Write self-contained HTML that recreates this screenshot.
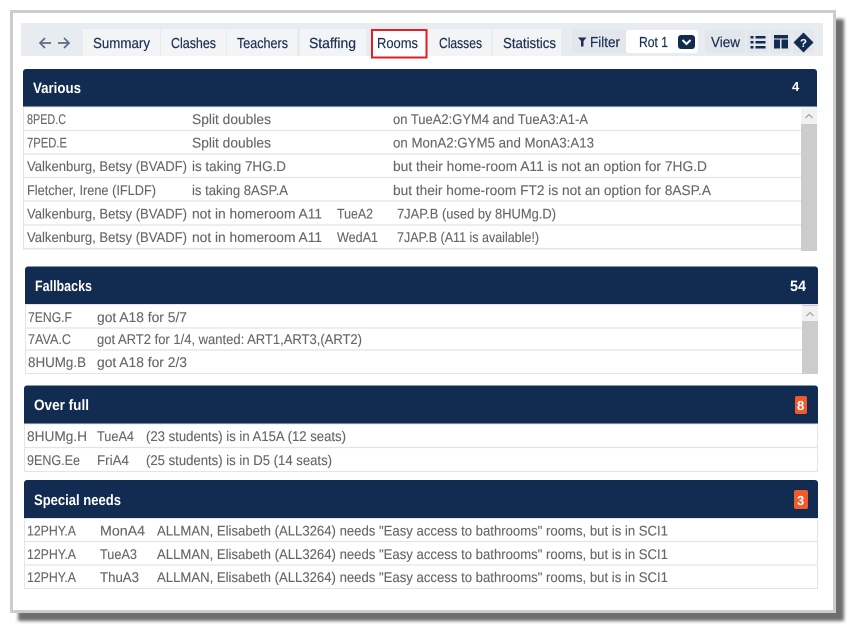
<!DOCTYPE html>
<html><head><meta charset="utf-8"><style>
html,body{margin:0;padding:0;background:#fff;width:857px;height:630px;overflow:hidden}
svg{display:block;filter:blur(.3px)}
text{font-family:"Liberation Sans",Arial,sans-serif;font-size:14px;fill:#666;stroke:#666;stroke-width:.12px;text-rendering:geometricPrecision}
.t{fill:#1a2f52;stroke:#1a2f52;stroke-width:.2px;font-size:14.5px}
.h{fill:#fff;stroke:none;font-size:15px;font-weight:bold}
.l{stroke:#e2e4e8;stroke-width:1.3}
</style></head><body>
<svg width="857" height="630" viewBox="0 0 857 630" xmlns="http://www.w3.org/2000/svg">
<defs><filter id="b" x="-5%" y="-5%" width="110%" height="110%"><feGaussianBlur stdDeviation="1.5"/></filter></defs>
<rect width="857" height="630" fill="#fff"/>
<rect x="18" y="19" width="826" height="602" fill="#6e6e6e" filter="url(#b)"/>
<rect x="11.5" y="11.5" width="823" height="600" fill="#fff" stroke="#cdcdcd" stroke-width="3"/>

<!-- toolbar -->
<rect x="21" y="23" width="802" height="33" fill="#e8ebef"/>
<g fill="#f2f4f6">
<rect x="83" y="29" width="77" height="27"/><rect x="161" y="29" width="65" height="27"/><rect x="227" y="29" width="70" height="27"/><rect x="300" y="29" width="66" height="27"/><rect x="428" y="29" width="63" height="27"/><rect x="493" y="29" width="68" height="27"/>
</g>
<rect x="372" y="30" width="54.5" height="27.5" fill="#fff" stroke="#e01f26" stroke-width="2"/>
<g stroke="#5d6c86" stroke-width="1.7" fill="none"><path d="M51 43H40M45 38l-5 5 5 5"/><path d="M58 43H69M64 38l5 5-5 5"/></g>
<text class="t" x="93" y="48" textLength="57" lengthAdjust="spacingAndGlyphs">Summary</text>
<text class="t" x="171" y="48" textLength="45" lengthAdjust="spacingAndGlyphs">Clashes</text>
<text class="t" x="237" y="48" textLength="51" lengthAdjust="spacingAndGlyphs">Teachers</text>
<text class="t" x="309" y="48" textLength="47" lengthAdjust="spacingAndGlyphs">Staffing</text>
<text class="t" x="377" y="48" textLength="41" lengthAdjust="spacingAndGlyphs">Rooms</text>
<text class="t" x="439" y="48" textLength="43" lengthAdjust="spacingAndGlyphs">Classes</text>
<text class="t" x="503" y="48" textLength="53" lengthAdjust="spacingAndGlyphs">Statistics</text>
<rect x="572" y="30" width="56" height="23" rx="3" fill="#e3e7ec"/>
<rect x="626" y="30" width="72" height="23" rx="3" fill="#fff"/>
<path d="M578 37.5h8.5l-3 3.500v5.500h-2.500v-5.500z" fill="#1a2f52"/>
<text class="t" x="590" y="47" textLength="30" lengthAdjust="spacingAndGlyphs">Filter</text>
<text class="t" x="639" y="47" textLength="29" lengthAdjust="spacingAndGlyphs">Rot 1</text>
<rect x="678" y="35" width="17" height="14" rx="3" fill="#122b50"/>
<path d="M682.5 40l4 4 4-4" stroke="#fff" stroke-width="2" fill="none"/>
<rect x="705" y="30" width="109" height="23" rx="3" fill="#e3e7ec"/>
<path d="M746 30v23M769.5 30v23M792 30v23" stroke="#eef0f3" stroke-width="1"/>
<text class="t" x="711" y="47" textLength="29" lengthAdjust="spacingAndGlyphs">View</text>
<g fill="#122b50">
<rect x="750.5" y="36" width="3" height="2.500"/><rect x="755.5" y="36" width="10" height="2.500"/>
<rect x="750.5" y="41" width="3" height="2.500"/><rect x="755.5" y="41" width="10" height="2.500"/>
<rect x="750.5" y="46" width="3" height="2.500"/><rect x="755.5" y="46" width="10" height="2.500"/>
<rect x="774" y="35" width="14" height="3.500"/><rect x="774" y="39.5" width="6" height="9"/><rect x="781.5" y="39.5" width="6.500" height="9"/>
<path d="M803.5 32.5l10 10-10 10-10-10z"/>
</g>
<text x="800" y="47" style="fill:#fff;stroke:none;font-size:11.5px;font-weight:bold">?</text>

<!-- Various -->
<path d="M23 107V72a3 3 0 0 1 3-3H814a3 3 0 0 1 3 3V107z" fill="#122b50"/>
<text class="h" x="33" y="93" textLength="48" lengthAdjust="spacingAndGlyphs">Various</text>
<text class="h" x="792" y="91" style="font-size:13px">4</text>
<rect x="23.5" y="107" width="793" height="142" fill="#fff" stroke="#e2e4e8"/>
<path class="l" d="M24 130.500H801M24 154H801M24 177.500H801M24 201H801M24 225H801M24 248.500H801"/>
<rect x="801" y="108" width="16" height="143" fill="#ccc"/>
<rect x="801" y="108" width="16" height="16" fill="#f1f1f1"/>
<path d="M805.5 118l3.500-3.500 3.500 3.500" stroke="#a8a8a8" stroke-width="1.3" fill="none"/>
<text x="27" y="124" textLength="39" lengthAdjust="spacingAndGlyphs">8PED.C</text>
<text x="192" y="124" textLength="79" lengthAdjust="spacingAndGlyphs">Split doubles</text>
<text x="393" y="124" textLength="195" lengthAdjust="spacingAndGlyphs">on TueA2:GYM4 and TueA3:A1-A</text>
<text x="27" y="147.5" textLength="40" lengthAdjust="spacingAndGlyphs">7PED.E</text>
<text x="192" y="147.5" textLength="79" lengthAdjust="spacingAndGlyphs">Split doubles</text>
<text x="393" y="147.5" textLength="201" lengthAdjust="spacingAndGlyphs">on MonA2:GYM5 and MonA3:A13</text>
<text x="27" y="171" textLength="160" lengthAdjust="spacingAndGlyphs">Valkenburg, Betsy (BVADF)</text>
<text x="192" y="171" textLength="94" lengthAdjust="spacingAndGlyphs">is taking 7HG.D</text>
<text x="393" y="171" textLength="314" lengthAdjust="spacingAndGlyphs">but their home-room A11 is not an option for 7HG.D</text>
<text x="27" y="195" textLength="129" lengthAdjust="spacingAndGlyphs">Fletcher, Irene (IFLDF)</text>
<text x="192" y="195" textLength="96" lengthAdjust="spacingAndGlyphs">is taking 8ASP.A</text>
<text x="393" y="195" textLength="318" lengthAdjust="spacingAndGlyphs">but their home-room FT2 is not an option for 8ASP.A</text>
<text x="27" y="218.5" textLength="160" lengthAdjust="spacingAndGlyphs">Valkenburg, Betsy (BVADF)</text>
<text x="192" y="218.5" textLength="130" lengthAdjust="spacingAndGlyphs">not in homeroom A11</text>
<text x="337" y="218.5" textLength="36" lengthAdjust="spacingAndGlyphs">TueA2</text>
<text x="397" y="218.5" textLength="159" lengthAdjust="spacingAndGlyphs">7JAP.B (used by 8HUMg.D)</text>
<text x="27" y="242" textLength="160" lengthAdjust="spacingAndGlyphs">Valkenburg, Betsy (BVADF)</text>
<text x="192" y="242" textLength="130" lengthAdjust="spacingAndGlyphs">not in homeroom A11</text>
<text x="337" y="242" textLength="41" lengthAdjust="spacingAndGlyphs">WedA1</text>
<text x="397" y="242" textLength="142" lengthAdjust="spacingAndGlyphs">7JAP.B (A11 is available!)</text>

<!-- Fallbacks -->
<path d="M25 304.500V269.500a3 3 0 0 1 3-3H815a3 3 0 0 1 3 3V304.500z" fill="#122b50"/>
<text class="h" x="35" y="291" textLength="57" lengthAdjust="spacingAndGlyphs">Fallbacks</text>
<text class="h" x="790" y="291" textLength="16" lengthAdjust="spacingAndGlyphs">54</text>
<rect x="25.5" y="304.5" width="792" height="69" fill="#fff" stroke="#e2e4e8"/>
<path class="l" d="M26 328H802M26 350H802"/>
<rect x="802" y="305" width="16" height="69" fill="#ccc"/>
<rect x="802" y="306" width="16" height="15" fill="#f1f1f1"/>
<path d="M806.5 316l3.500-3.500 3.500 3.500" stroke="#a8a8a8" stroke-width="1.3" fill="none"/>
<text x="28" y="322" textLength="44" lengthAdjust="spacingAndGlyphs">7ENG.F</text>
<text x="97" y="322" textLength="90" lengthAdjust="spacingAndGlyphs">got A18 for 5/7</text>
<text x="28" y="344" textLength="43" lengthAdjust="spacingAndGlyphs">7AVA.C</text>
<text x="97" y="344" textLength="265" lengthAdjust="spacingAndGlyphs">got ART2 for 1/4, wanted: ART1,ART3,(ART2)</text>
<text x="28" y="367" textLength="58" lengthAdjust="spacingAndGlyphs">8HUMg.B</text>
<text x="97" y="367" textLength="90" lengthAdjust="spacingAndGlyphs">got A18 for 2/3</text>

<!-- Over full -->
<path d="M24 424V388.500a3 3 0 0 1 3-3H815a3 3 0 0 1 3 3V424z" fill="#122b50"/>
<text class="h" x="34" y="410" textLength="55" lengthAdjust="spacingAndGlyphs">Over full</text>
<rect x="795" y="396" width="12" height="18" rx="2" fill="#f15a29"/>
<text class="h" x="797" y="410" style="font-size:13px">8</text>
<rect x="24.5" y="424" width="793" height="47.5" fill="#fff" stroke="#e2e4e8"/>
<path class="l" d="M25 447.500H817"/>
<text x="27" y="441" textLength="60" lengthAdjust="spacingAndGlyphs">8HUMg.H</text>
<text x="97" y="441" textLength="37" lengthAdjust="spacingAndGlyphs">TueA4</text>
<text x="146" y="441" textLength="200" lengthAdjust="spacingAndGlyphs">(23 students) is in A15A (12 seats)</text>
<text x="27" y="465" textLength="53" lengthAdjust="spacingAndGlyphs">9ENG.Ee</text>
<text x="97" y="465" textLength="32" lengthAdjust="spacingAndGlyphs">FriA4</text>
<text x="146" y="465" textLength="186" lengthAdjust="spacingAndGlyphs">(25 students) is in D5 (14 seats)</text>

<!-- Special needs -->
<path d="M24 518.500V483a3 3 0 0 1 3-3H815a3 3 0 0 1 3 3V518.500z" fill="#122b50"/>
<text class="h" x="34" y="505" textLength="87" lengthAdjust="spacingAndGlyphs">Special needs</text>
<rect x="794" y="490" width="14" height="19" rx="2" fill="#f15a29"/>
<text class="h" x="797" y="505" style="font-size:13px">3</text>
<rect x="24.5" y="518.5" width="793" height="70" fill="#fff" stroke="#e2e4e8"/>
<path class="l" d="M25 541.500H817M25 565H817"/>
<text x="27" y="535.5" textLength="49" lengthAdjust="spacingAndGlyphs">12PHY.A</text>
<text x="100" y="535.5" textLength="45" lengthAdjust="spacingAndGlyphs">MonA4</text>
<text x="157" y="535.5" textLength="511" lengthAdjust="spacingAndGlyphs">ALLMAN, Elisabeth (ALL3264) needs "Easy access to bathrooms" rooms, but is in SCI1</text>
<text x="27" y="559" textLength="49" lengthAdjust="spacingAndGlyphs">12PHY.A</text>
<text x="100" y="559" textLength="37" lengthAdjust="spacingAndGlyphs">TueA3</text>
<text x="157" y="559" textLength="511" lengthAdjust="spacingAndGlyphs">ALLMAN, Elisabeth (ALL3264) needs "Easy access to bathrooms" rooms, but is in SCI1</text>
<text x="27" y="582" textLength="49" lengthAdjust="spacingAndGlyphs">12PHY.A</text>
<text x="100" y="582" textLength="39" lengthAdjust="spacingAndGlyphs">ThuA3</text>
<text x="157" y="582" textLength="511" lengthAdjust="spacingAndGlyphs">ALLMAN, Elisabeth (ALL3264) needs "Easy access to bathrooms" rooms, but is in SCI1</text>
</svg>
</body></html>
